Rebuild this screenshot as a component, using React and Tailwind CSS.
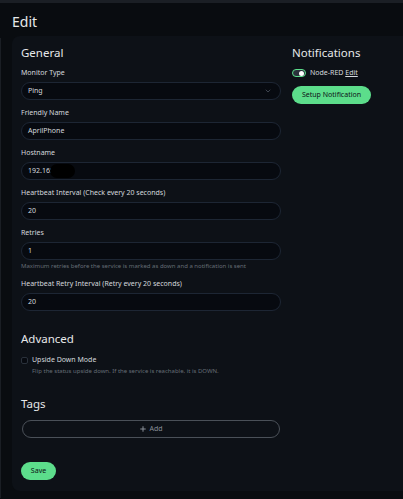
import { ChevronDown, Plus } from "lucide-react";

const fields = [
    { label: "Friendly Name", value: "AprilPhone" },
    { label: "Hostname", value: "192.168", masked: true },
    { label: "Heartbeat Interval (Check every 20 seconds)", value: "20" },
    { label: "Retries", value: "1", help: "Maximum retries before the service is marked as down and a notification is sent" },
    { label: "Heartbeat Retry Interval (Retry every 20 seconds)", value: "20" },
];

function Field({ label, value, masked, help }) {
    return (
        <div className="mt-[7px]">
            <label className="block text-[7px] leading-[12px] text-[#d5d9de] mb-[3px]">{label}</label>
            <div className="relative h-[18px] rounded-full bg-[#070a10] border border-[#1d2634] flex items-center px-[6px] text-[7px] text-[#d5d9de]">
                {value}
                {masked && <span className="absolute left-[28px] top-[1px] w-[25px] h-[14px] rounded-full bg-black" />}
            </div>
            {help && <p className="mt-[2px] text-[6px] leading-[9px] text-[#656d76]">{help}</p>}
        </div>
    );
}

export default function App() {
    return (
        <div className="w-[403px] h-[499px] overflow-hidden bg-[#090c10] text-[#d5d9de]" style={{ fontFamily: "'Noto Sans', 'Open Sans', sans-serif" }}>
            <div className="h-[3px] bg-[#1b1f25]" />
            <div className="relative">
                <div className="absolute left-0 top-[35px] w-[1px] h-[460px] bg-[#1a1e24]" />
                <h1 className="pl-[12px] pt-[8px] h-[33px] text-[14px] leading-[22px] text-[#e6e8ea]">Edit</h1>
                <div className="ml-[12px] w-[540px] h-[455px] rounded-[8px] bg-[#0d1117] pl-[9px] pt-[8px] flex">
                    <div className="w-[260px]">
                        <h2 className="text-[11.5px] leading-[18px] text-[#e6e8ea]">General</h2>
                        <div className="mt-[5px]">
                            <label className="block text-[7px] leading-[12px] mb-[3px]">Monitor Type</label>
                            <div className="h-[18px] rounded-full bg-[#070a10] border border-[#1d2634] flex items-center justify-between px-[6px] text-[7px]">
                                Ping
                                <ChevronDown size={8} className="text-[#5a6270] mr-[2px]" />
                            </div>
                        </div>
                        {fields.map((f) => (
                            <Field key={f.label} {...f} />
                        ))}

                        <h2 className="mt-[19px] text-[11.5px] leading-[18px] text-[#e6e8ea]">Advanced</h2>
                        <div className="mt-[6px] flex items-center gap-[4px]">
                            <span className="w-[7px] h-[7px] rounded-[2px] bg-[#070a10] border border-[#2a313b]" />
                            <span className="text-[7px] leading-[12px]">Upside Down Mode</span>
                        </div>
                        <p className="ml-[11px] text-[6px] leading-[10px] text-[#656d76]">
                            Flip the status upside down. If the service is reachable, it is DOWN.
                        </p>

                        <h2 className="mt-[19px] text-[11.5px] leading-[18px] text-[#e6e8ea]">Tags</h2>
                        <button className="mt-[7px] ml-[1px] w-[258px] h-[18px] rounded-full border border-[#4a5058] flex items-center justify-center gap-[2px] text-[7px] text-[#8a9099]">
                            <Plus size={8} strokeWidth={3} />
                            Add
                        </button>

                        <button className="mt-[24px] w-[35px] h-[18px] rounded-full bg-[#5cdd8b] text-[7px] text-[#0d1117]">
                            Save
                        </button>
                    </div>

                    <div className="ml-[11px]">
                        <h2 className="text-[11.5px] leading-[18px] text-[#e6e8ea]">Notifications</h2>
                        <div className="mt-[5px] flex items-center gap-[4px] text-[7px] leading-[12px]">
                            <span className="w-[14px] h-[8px] rounded-full bg-[#2a313b] border border-[#5cdd8b] flex items-center justify-end pr-[1px]">
                                <span className="w-[5px] h-[5px] rounded-full bg-white" />
                            </span>
                            <span>Node-RED <span className="underline">Edit</span></span>
                        </div>
                        <button className="mt-[5px] w-[79px] h-[18px] rounded-full bg-[#5cdd8b] text-[7px] text-[#0d1117]">
                            Setup Notification
                        </button>
                    </div>
                </div>
            </div>
        </div>
    );
}
